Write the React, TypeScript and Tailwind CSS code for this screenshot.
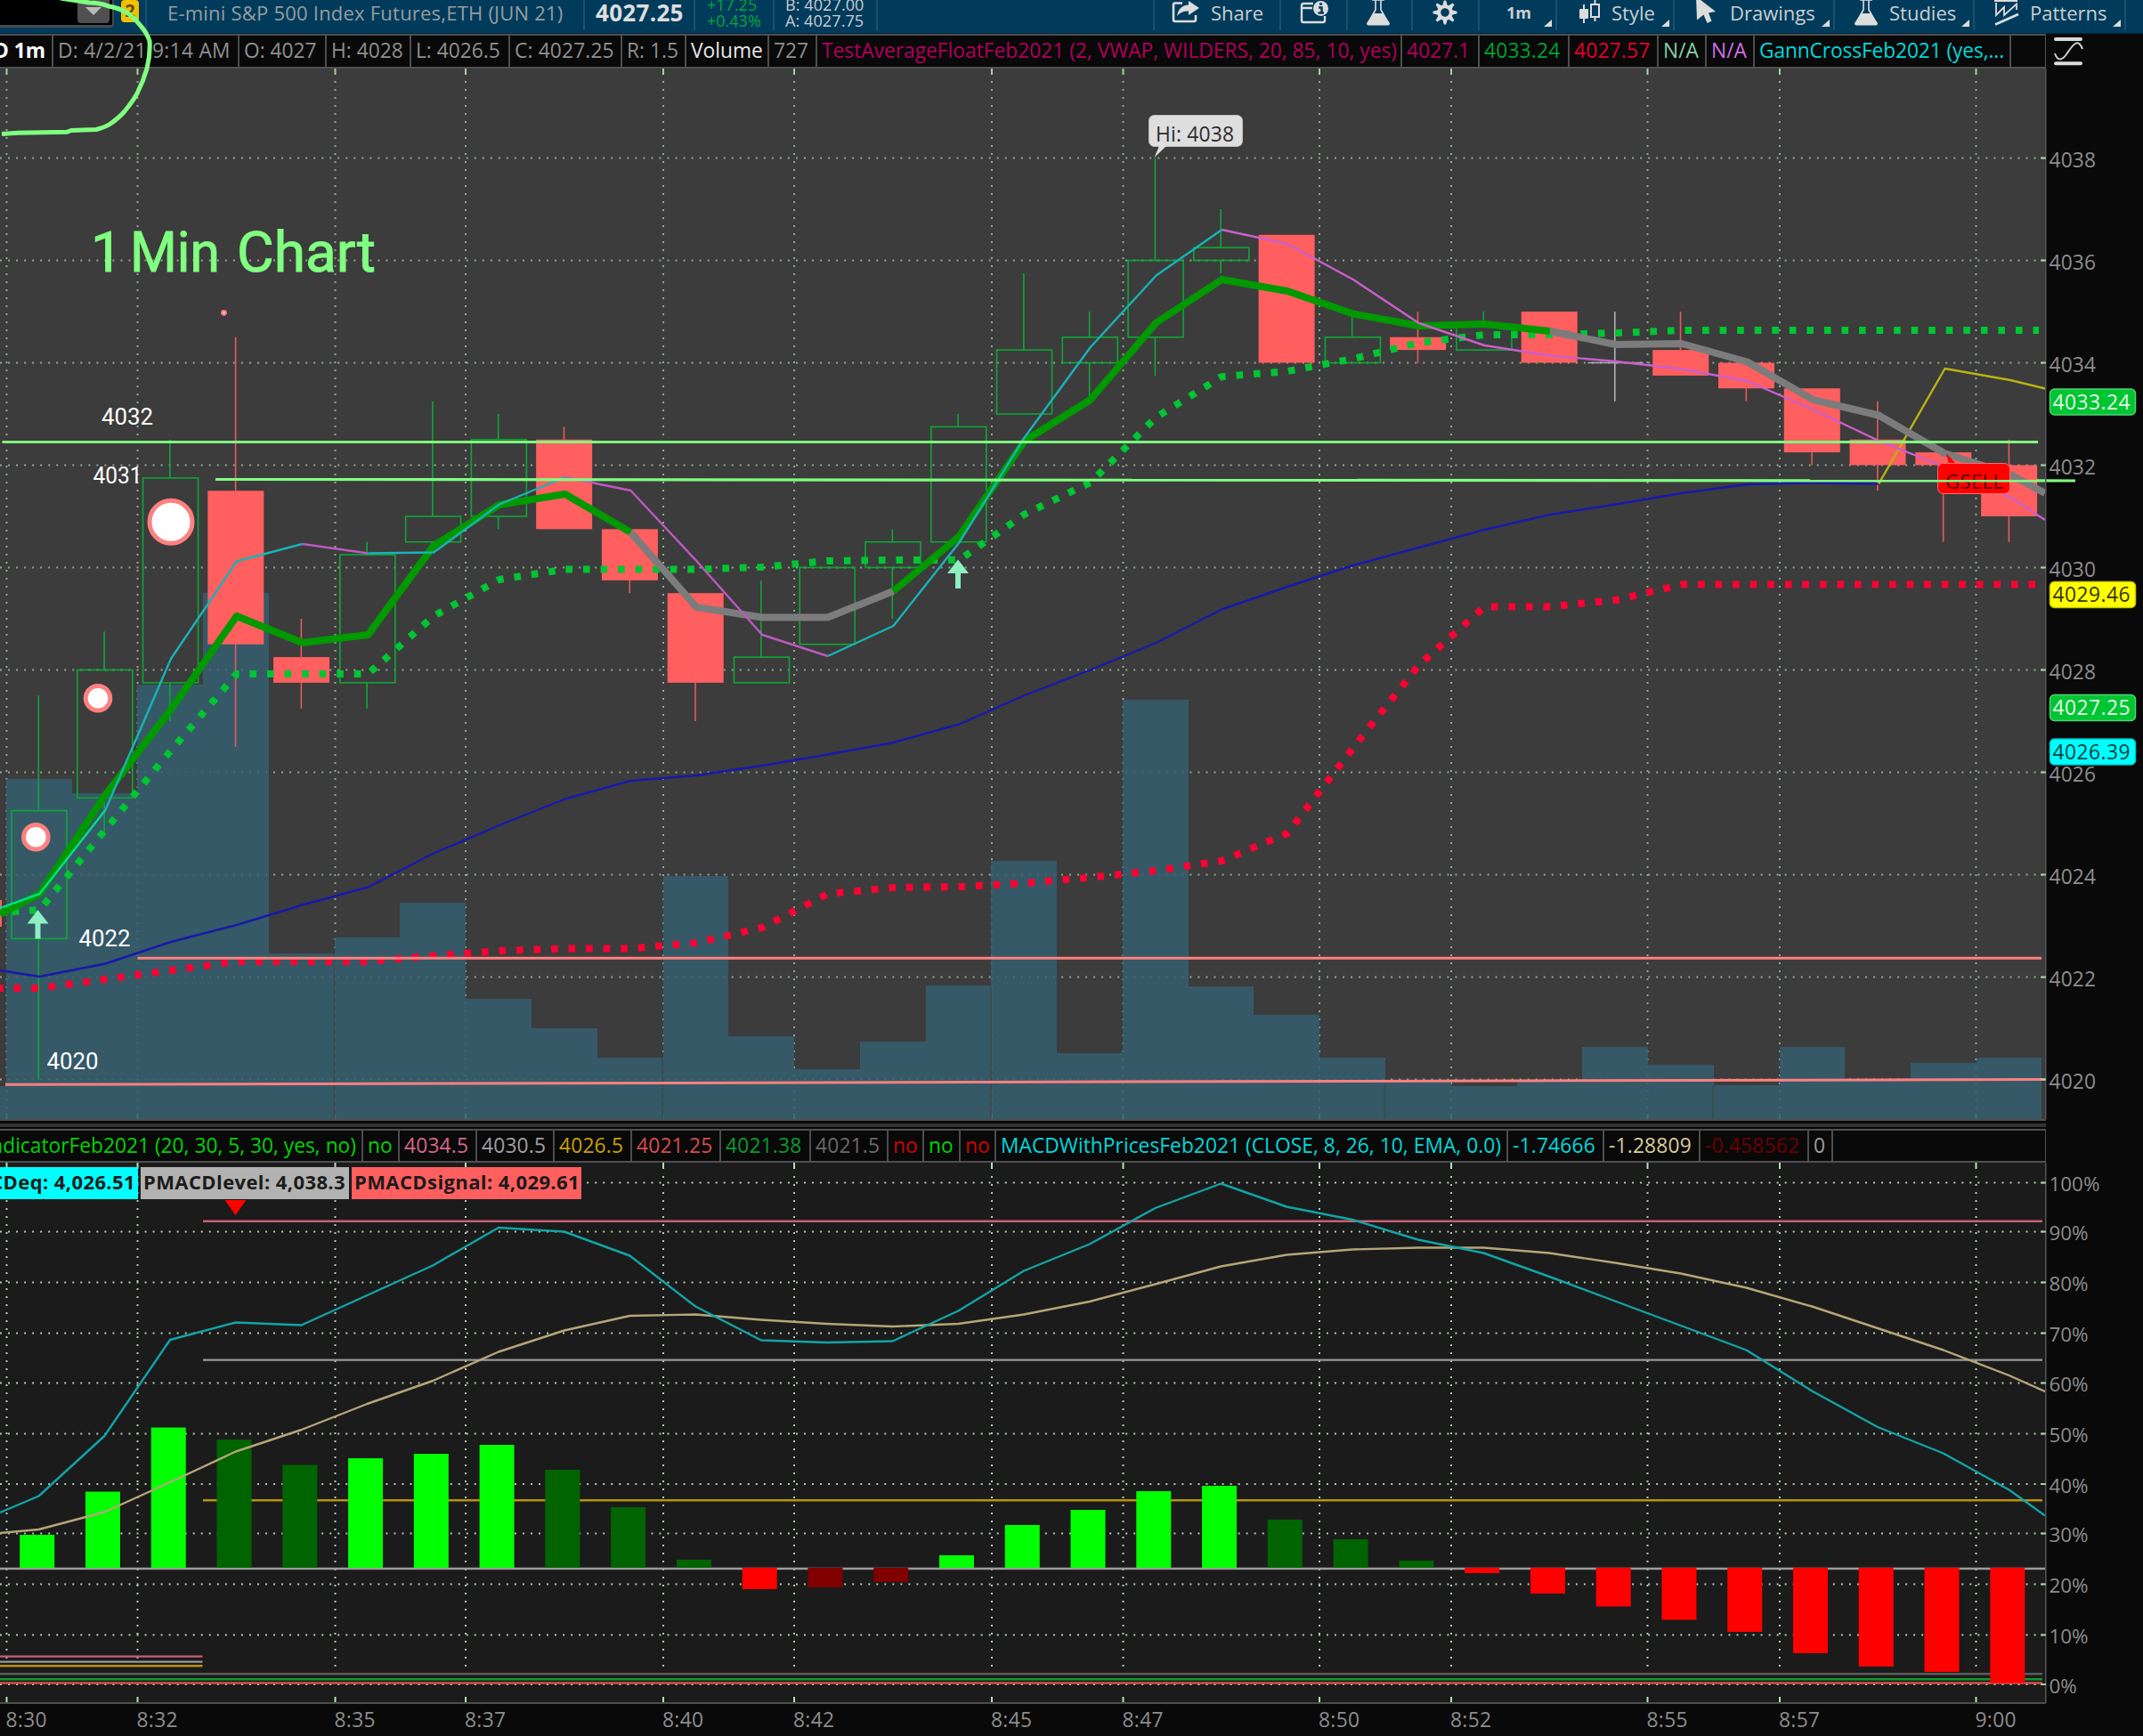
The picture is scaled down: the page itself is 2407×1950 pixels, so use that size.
import React from 'react';
import clsx from 'clsx';

const STEP = 73.77;
const FIRST = 43;
const PLOT_RIGHT = 2297;

const candleX = (i: number) => FIRST + STEP * i;
const priceY = (p: number) => 177.5 + (4038 - p) * 57.5;

type Candle = [kind: 'up' | 'down' | 'flat', high: number, top: number, bottom: number, low: number];

const candles: Candle[] = [
    ['up', 4027.5, 4025.25, 4022.75, 4020],
    ['up', 4028.75, 4028, 4025.5, 4024.75],
    ['up', 4032.5, 4031.75, 4027.75, 4027],
    ['down', 4034.5, 4031.5, 4028.5, 4026.5],
    ['down', 4029, 4028.25, 4027.75, 4027.25],
    ['up', 4030.5, 4030.25, 4027.75, 4027.25],
    ['up', 4033.25, 4031, 4030.5, 4030.5],
    ['up', 4033, 4032.5, 4031, 4030.75],
    ['down', 4032.75, 4032.5, 4030.75, 4030.75],
    ['down', 4030.75, 4030.75, 4029.75, 4029.5],
    ['down', 4029.5, 4029.5, 4027.75, 4027],
    ['up', 4029.75, 4028.25, 4027.75, 4027.75],
    ['up', 4030, 4030, 4028.5, 4028.5],
    ['up', 4030.75, 4030.5, 4030, 4029],
    ['up', 4033, 4032.75, 4030.5, 4030.5],
    ['up', 4035.75, 4034.25, 4033, 4033],
    ['up', 4035, 4034.5, 4034, 4033.25],
    ['up', 4038, 4036, 4034.5, 4033.75],
    ['up', 4037, 4036.25, 4036, 4035.75],
    ['down', 4036.5, 4036.5, 4034, 4034],
    ['up', 4035, 4034.5, 4034, 4034],
    ['down', 4035, 4034.5, 4034.25, 4034],
    ['up', 4035, 4034.75, 4034.25, 4034.25],
    ['down', 4035, 4035, 4034, 4034],
    ['flat', 4035, 4034, 4034, 4033.25],
    ['down', 4035, 4034.25, 4033.75, 4033.75],
    ['down', 4034, 4034, 4033.5, 4033.25],
    ['down', 4033.5, 4033.5, 4032.25, 4032],
    ['down', 4033.25, 4032.5, 4032, 4031.5],
    ['down', 4032.25, 4032.25, 4032, 4030.5],
    ['down', 4032.5, 4032, 4031, 4030.5],
];

const volumeTops = [
    875, 891, 769, 666, 1071, 1053, 1014, 1122, 1155, 1188, 984, 1164, 1201, 1170, 1107, 967,
    1183, 786, 1108, 1140, 1188, 1213, 1220, 1213, 1176, 1196, 1219, 1176, 1213, 1194, 1188,
];

const timeTicks: [number, string][] = [
    [7.5, '8:30'], [154.5, '8:32'], [376.5, '8:35'], [523, '8:37'], [745, '8:40'], [892, '8:42'],
    [1114, '8:45'], [1261.5, '8:47'], [1482, '8:50'], [1630, '8:52'], [1850.5, '8:55'],
    [1999, '8:57'], [2219.5, '9:00'],
];

const percentTicks: [number, string][] = [
    [1328.5, '100%'], [1383.5, '90%'], [1440.5, '80%'], [1497.5, '70%'], [1553.5, '60%'], [1610.5, '50%'],
    [1667, '40%'], [1722.5, '30%'], [1779.5, '20%'], [1836.5, '10%'], [1892, '0%'],
];

// moving average, split where its colour changes
const maY = [
    1004, 893, 797, 692, 722, 713, 613, 567, 555, 598, 682, 693.5, 693.5, 664, 602.5, 495,
    449, 362.5, 314, 327, 352.5, 366, 364, 372, 387, 386, 406.5, 449, 466.5, 509, 533,
];
const fastY = [
    1004, 910, 740, 630.5, 611, 621.5, 620.5, 566.5, 536, 551, 630, 713, 737, 703, 609.5, 491,
    390, 309.5, 258, 274, 314, 363, 388, 399.5, 406, 414.5, 428, 460, 495, 524.5, 558.5,
];
const blueY = [
    1097, 1082.5, 1058, 1039, 1016.5, 996.5, 958.5, 927, 897.5, 877, 871, 860, 847.5, 834, 813.5, 781,
    752.5, 722, 684.5, 659, 635, 615, 595, 578, 566.5, 554, 544, 542.5, 543.5,
];
const upperY = [
    1022, 932, 843, 757, 757, 757, 692, 651, 639.5, 639.5, 639.5, 637, 630, 629, 629, 577.5,
    542, 468.5, 423, 417, 403, 385, 376, 376, 374, 371, 371, 371, 371, 371, 371,
];
const lowerY = [
    1110, 1100, 1090, 1080, 1080, 1080, 1073.5, 1068, 1065.5, 1065.5, 1059, 1042, 1004, 997, 996, 992,
    985.5, 978, 967, 936, 840, 747, 681.5, 681.5, 674, 656.5, 656.5, 656.5, 656.5, 656.5, 656.5,
];
const macdY = [
    1680.5, 1613, 1505, 1485.5, 1488.5, 1455, 1421.5, 1379, 1383.5, 1410.5, 1467.5, 1505.5, 1508, 1506.5,
    1472.5, 1427.5, 1397.5, 1357, 1329.5, 1355.5, 1370, 1392.5, 1407.5, 1434, 1461.5, 1489, 1516.5, 1562.5,
    1603, 1632.5, 1673.5,
];
const signalY = [
    1718, 1698.5, 1665, 1630.5, 1606, 1577, 1551, 1518.5, 1494.5, 1478, 1476.5, 1482.5, 1487, 1490, 1487,
    1476.5, 1462, 1442.5, 1422.5, 1409.5, 1403.5, 1401.5, 1401.5, 1407.5, 1418.5, 1430.5, 1446.5, 1467.5,
    1492, 1516.5, 1545,
];

const LIME = '#00ff00';
const FOREST = '#006400';
const RED = '#ff0000';
const MAROON = '#800000';

const histogram: [number, string][] = [
    [1724, LIME], [1675.5, LIME], [1603.5, LIME], [1617, FOREST], [1645.5, FOREST], [1638, LIME],
    [1633, LIME], [1623, LIME], [1651, FOREST], [1693, FOREST], [1752, FOREST], [1785, RED],
    [1783, MAROON], [1777, MAROON], [1747, LIME], [1713, LIME], [1696, LIME], [1675, LIME],
    [1669, LIME], [1707, FOREST], [1729, FOREST], [1753, FOREST], [1767, RED], [1790, RED],
    [1804.5, RED], [1819.5, RED], [1833, RED], [1857, RED], [1872, RED], [1878, RED], [1890.5, RED],
];

const line = (ys: number[], from = 0, to = ys.length - 1, dx = 1.5) =>
    ys.slice(from, to + 1).map((y, k) => `${(candleX(from + k) + dx).toFixed(1)},${y}`).join(' ');

const font = '"Open Sans", "Noto Sans", sans-serif';
const noteFont = 'Roboto, "Open Sans", sans-serif';

interface CellProps {
    width: string;
    color: string;
    children?: React.ReactNode;
    className?: string;
}

const Cell: React.FC<CellProps> = ({ width, color, children, className }) => (
    <div
        className={clsx(
            'flex h-full shrink-0 items-center overflow-hidden whitespace-nowrap border-r-2 border-[#4d4d4d] pl-[5px]',
            width,
            color,
            className
        )}
    >
        {children}
    </div>
);

const StudyRow: React.FC<{ children: React.ReactNode; className?: string }> = ({ children, className }) => (
    <div className={clsx('flex w-[2298px] shrink-0 border-y-2 border-r border-[#4f4f4f] bg-[#090909] text-[22.75px]', className)}>
        {children}
    </div>
);

interface ToolProps {
    width: string;
    children: React.ReactNode;
    menu?: boolean;
    className?: string;
}

const Tool: React.FC<ToolProps> = ({ width, children, menu, className }) => (
    <div className={clsx('relative flex h-[34px] shrink-0 items-start border-l-2 border-[#1b4f6e] whitespace-nowrap', width, className)}>
        {children}
        {menu && (
            <svg className="absolute top-[22px] right-[4px]" width="9" height="9">
                <path d="M9 0V8H0Z" fill="#dcdcdc" />
            </svg>
        )}
    </div>
);

const Flask = () => (
    <svg width="28" height="30" viewBox="0 0 28 30" className="shrink-0">
        <path d="M7 0H21M11 0V11L3 25M17 0V11L25 25" stroke="#dcdcdc" strokeWidth="1.6" fill="none" />
        <path d="M9 15H19L27 26Q27 28.500 25 28.500H3Q1 28.500 1 26Z" fill="#dcdcdc" />
    </svg>
);

const Toolbar = () => (
    <div className="flex h-[38px] w-full shrink-0 overflow-hidden border-b border-[#00283f] bg-[#003b5b] text-[22px] leading-[28px] text-[#c9ced2]">
        <div className="flex h-[31px] w-[128px] shrink-0 justify-end rounded-br-[4px] border-r-2 border-b-[3px] border-[#45494c] bg-black pr-[3px]">
            <div className="flex h-[26px] w-[36px] justify-center rounded-b-[4px] bg-[#505050] pt-[8px]">
                <svg width="18" height="9">
                    <path d="M0 0H18L9 9Z" fill="#b9b9b9" />
                </svg>
            </div>
        </div>
        <div className="ml-[8px] h-[25px] w-[20px] shrink-0 rounded-[4px] bg-[#f3c000] text-center text-[20px] leading-[24px] font-bold text-[#5c4a00]">2</div>
        <Tool width="w-[492px]" className="ml-[7px] pl-[23px] tracking-[0.22px] text-[#989da0]">E-mini S&amp;P 500 Index Futures,ETH (JUN 21)</Tool>
        <Tool width="w-[124px]" className="pl-[12px] text-[26px] font-bold tracking-[0.3px] text-[#dedede]">4027.25</Tool>
        <Tool width="w-[89px]" className="flex-col pl-[13px] text-[18px] leading-[18px] text-[#00a83c]">
            <span className="-mt-[4px]">+17.25</span>
            <span>+0.43%</span>
        </Tool>
        <Tool width="w-[116px]" className="flex-col pl-[12px] text-[18px] leading-[18px] text-[#c9ced2]">
            <span className="-mt-[4px] tracking-[0.1px]">B: 4027.00</span>
            <span className="tracking-[0.1px]">A: 4027.75</span>
        </Tool>
        <Tool width="w-[311px]"><span /></Tool>
        <Tool width="w-[142px]" className="pl-[19px]">
            <svg width="33" height="27" viewBox="0 0 33 27" className="mr-[11px]">
                <path d="M12 3.500H4Q2 3.500 2 5.500V22Q2 24 4 24H25Q27 24 27 22V17" fill="none" stroke="#dcdcdc" strokeWidth="2.600" />
                <path d="M19 1L31 9L19 17V12.500Q11 12 6 18Q8 6 19 5.500Z" fill="#dcdcdc" />
            </svg>
            Share
        </Tool>
        <Tool width="w-[75px]" className="pl-[21px]">
            <svg width="34" height="27" viewBox="0 0 34 27">
                <path d="M15 4H4Q2 4 2 6V23Q2 25 4 25H26Q28 25 28 23V18M2 9H14" fill="none" stroke="#dcdcdc" strokeWidth="2.400" />
                <circle cx="23.500" cy="9.500" r="8.500" fill="#dcdcdc" />
                <path d="M22 4.500H25M21 8.500H24.500V14M20.500 14.500H27" stroke="#003b5b" strokeWidth="2.500" fill="none" />
            </svg>
        </Tool>
        <Tool width="w-[73px]" className="pl-[20px]"><Flask /></Tool>
        <Tool width="w-[75px]" className="pl-[22px]">
            <svg width="28" height="28" viewBox="-14 -14 28 28">
                <circle r="6.800" fill="none" stroke="#dcdcdc" strokeWidth="4" />
                {[0, 45, 90, 135, 180, 225, 270, 315].map(a => (
                    <path key={a} d="M-2.800 -7.500L-1.200 -13.500H1.200L2.800 -7.500Z" fill="#dcdcdc" transform={`rotate(${a})`} />
                ))}
            </svg>
        </Tool>
        <Tool width="w-[87px]" menu className="pl-[30px] text-[18px] font-bold">1m</Tool>
        <Tool width="w-[132px]" menu className="pl-[24px]">
            <svg width="25" height="27" viewBox="0 0 25 27" className="mr-[12px]">
                <path d="M6 5V26M18.500 0V24" stroke="#dcdcdc" strokeWidth="2" />
                <rect x="1" y="10" width="10" height="11" rx="1" fill="#dcdcdc" />
                <rect x="14" y="5" width="9" height="14" fill="#003b5b" stroke="#dcdcdc" strokeWidth="2" />
            </svg>
            Style
        </Tool>
        <Tool width="w-[180px]" menu className="pl-[24px]">
            <svg width="23" height="27" viewBox="0 0 23 27" className="mr-[15px]">
                <path d="M0 -4L22 13L14 14.500L17.500 23.500L12.500 26L8.500 16.500L1 22.500Z" fill="#dcdcdc" />
            </svg>
            Drawings
        </Tool>
        <Tool width="w-[157px]" menu className="pl-[21px]">
            <Flask />
            <span className="ml-[12px]">Studies</span>
        </Tool>
        <Tool width="w-[170px]" menu className="pl-[21px]">
            <svg width="30" height="30" viewBox="0 0 30 30" className="mr-[11px]">
                <path d="M1 0.500H27M2 27.500L28 16" stroke="#dcdcdc" strokeWidth="3" />
                <path d="M3 3V17L12 8V17L26 4.500V11" fill="none" stroke="#dcdcdc" strokeWidth="1.800" />
            </svg>
            Patterns
        </Tool>
        <Tool width="w-[20px]"><span /></Tool>
    </div>
);

const Badge: React.FC<{ y: number; fill: string; stroke: string; color: string; text: string }> = ({ y, fill, stroke, color, text }) => (
    <g>
        <rect x="2302.500" y={y} width="96" height="29" rx="5" fill={fill} stroke={stroke} strokeWidth="1.500" />
        <text x="2305.500" y={y + 22.8} fontSize="22.75" textLength="87" fill={color}>{text}</text>
    </g>
);

const UpArrow: React.FC<{ x: number; y: number }> = ({ x, y }) => (
    <path d={`M${x} ${y}l12 15.500h-9v17h-6v-17h-9Z`} fill="#8eefc0" />
);

const Marker: React.FC<{ x: number; y: number; r: number }> = ({ x, y, r }) => (
    <circle cx={x} cy={y} r={r} fill="#fff" stroke="#ff8080" strokeWidth="5" />
);

const PriceChart = () => (
    <svg className="block shrink-0" width="2407" height="1180" viewBox="0 77 2407 1180" fontFamily={font}>
        <rect x="0" y="77" width="2298" height="1180" fill="#3c3c3c" />
        <g stroke="#91a891" strokeWidth="2">
            {[4038, 4036, 4034, 4032, 4030, 4028, 4026, 4024, 4022, 4020].map(p => (
                <path key={p} d={`M0 ${priceY(p)}H${PLOT_RIGHT}`} strokeDasharray="2 7.03" />
            ))}
            {timeTicks.map(([x]) => (
                <path key={x} d={`M${x} 91V1250`} strokeDasharray="2 7" />
            ))}
        </g>
        <g stroke="#a6cfa6" strokeWidth="2">
            {timeTicks.map(([x]) => (
                <path key={x} d={`M${x} 77V84M${x} 1251V1257`} />
            ))}
        </g>
        <g fill="#345e6f" fillOpacity="0.85">
            <rect x="0" y="1220" width="7" height="37" />
            {volumeTops.map((y, i) => (
                <rect key={i} x={6.8 + STEP * i} y={y} width={i === 30 ? 73 : STEP} height={1257 - y} shapeRendering="crispEdges" />
            ))}
        </g>
        <path d="M375.500 1071V1257M744.500 1188V1257M1113 1107V1257M1555.500 1213V1257M1924 1219V1257" stroke="#3c4a50" strokeWidth="1.500" />

        {candles.map(([kind, high, top, bottom, low], i) => {
            const x = candleX(i);
            const stroke = kind === 'up' ? '#0ea736' : kind === 'down' ? '#e85a5a' : '#b0b0b0';
            return (
                <g key={i} stroke={stroke} strokeWidth="1.600">
                    <path d={`M${x + 0.3} ${priceY(high)}V${priceY(top)}M${x + 0.3} ${priceY(bottom)}V${priceY(low)}`} />
                    {kind === 'up' && (
                        <rect x={x - 30} y={priceY(top)} width="62" height={priceY(bottom) - priceY(top)} fill="none" />
                    )}
                    {kind === 'down' && (
                        <rect x={x - 31} y={priceY(top)} width="63" height={priceY(bottom) - priceY(top)} fill="#ff5f5f" stroke="none" />
                    )}
                    {kind === 'flat' && <path d={`M${x - 30} ${priceY(top)}H${x + 32}`} />}
                </g>
            );
        })}
        <rect x="0" y="1011" width="2" height="30" fill="#ff5f5f" />

        <g fill="none" strokeLinejoin="round">
            <polyline points={`0,1025 ${line(upperY)} 2290,371`} stroke="#00c532" strokeWidth="8" strokeDasharray="7.600 11.950" strokeDashoffset="6" />
            <polyline points={`0,1110 ${line(lowerY)} 2297,656.5`} stroke="#ff0032" strokeWidth="8" strokeDasharray="7.600 11.950" strokeDashoffset="4" />
            <polyline points={`0,1090 ${line(blueY)}`} stroke="#1818ad" strokeWidth="2.400" />
            <polyline points={`${line(blueY, 28)} 2184.5,414 2258,427 2297,436.5`} stroke="#b9b414" strokeWidth="2.400" />
            <g strokeWidth="8">
                <polyline points={`0,1027 ${line(maY, 0, 9)}`} stroke="#009900" />
                <polyline points={line(maY, 9, 13)} stroke="#7c7c7c" />
                <polyline points={line(maY, 13, 23)} stroke="#009900" />
                <polyline points={`${line(maY, 23)} 2297,554`} stroke="#7c7c7c" />
            </g>
            <g strokeWidth="2.400">
                <polyline points={`0,1020 ${line(fastY, 0, 1)}`} stroke="#00e08a" />
                <polyline points={line(fastY, 1, 4)} stroke="#19b3b6" />
                <polyline points={line(fastY, 4, 5)} stroke="#bd59c0" />
                <polyline points={line(fastY, 5, 8)} stroke="#19b3b6" />
                <polyline points={line(fastY, 8, 12)} stroke="#bd59c0" />
                <polyline points={line(fastY, 12, 18)} stroke="#19b3b6" />
                <polyline points={`${line(fastY, 18)} 2297,584`} stroke="#c95fcb" />
            </g>
        </g>
        <UpArrow x={42.5} y={1022} />
        <UpArrow x={1076} y={628.5} />

        <rect x="1290.500" y="129.500" width="105" height="35" rx="6" fill="#dedede" stroke="#c0c0c0" />
        <path d="M1302 164L1296.500 177L1310 164Z" fill="#dedede" />
        <text x="1298" y="158.800" fontSize="22.75" textLength="88" fill="#2c2c2c">Hi: 4038</text>
        <path d="M2186 509L2189 522H2198Z" fill={RED} />
        <rect x="2176.500" y="520.500" width="81" height="34" rx="6" fill={RED} stroke="#ff6a6a" strokeWidth="1" />
        <text x="2185" y="548.500" fontSize="22" textLength="65" fill="#5a0000">GSELL</text>

        <g fill="none" stroke="#80ff80" strokeWidth="3.200">
            <path d="M2.500 496.500H2289" />
            <path d="M242 538.500L2331 540" />
        </g>
        <g fill="none" stroke="#ff8080" strokeWidth="3">
            <path d="M154.500 1076.300H2293" />
            <path d="M6 1218.300L2298 1212.500" />
        </g>
        <Marker x={192} y={586.3} r={24} />
        <Marker x={110} y={784.3} r={13.8} />
        <Marker x={40.3} y={940.3} r={13.8} />
        <circle cx="251.500" cy="351.300" r="2.200" fill="#fff" stroke="#ff8080" strokeWidth="2.400" />
        <g fontFamily={noteFont}>
            <g fontSize="63" fill="#80ff80" stroke="#80ff80" strokeWidth="1">
                <text x="102" y="305">1</text>
                <text x="146" y="305" textLength="101" lengthAdjust="spacingAndGlyphs">Min</text>
                <text x="266" y="305" textLength="156" lengthAdjust="spacingAndGlyphs">Chart</text>
            </g>
            <g fill="#fff" fontSize="26">
                <text x="114" y="477" textLength="58" lengthAdjust="spacingAndGlyphs">4032</text>
                <text x="104.500" y="543" textLength="55" lengthAdjust="spacingAndGlyphs">4031</text>
                <text x="88.500" y="1063" textLength="58" lengthAdjust="spacingAndGlyphs">4022</text>
                <text x="52.500" y="1200.500" textLength="58" lengthAdjust="spacingAndGlyphs">4020</text>
            </g>
        </g>

        <rect x="2297" y="77" width="1.500" height="1180" fill="#555" />
        <g fontSize="22.75" fill="#8d8d8d">
            {[4038, 4036, 4034, 4032, 4030, 4028, 4026, 4024, 4022, 4020].map(p => (
                <g key={p}>
                    <rect x="2292" y={priceY(p) - 1} width="6" height="2" fill="#a6cfa6" />
                    <text x="2301.500" y={priceY(p) + 10} textLength="52.500">{p}</text>
                </g>
            ))}
        </g>
        <Badge y={437} fill="#00c532" stroke="#52d172" color="#e4f8e8" text="4033.24" />
        <Badge y={653.5} fill="#ffff00" stroke="#c9c900" color="#333300" text="4029.46" />
        <Badge y={780.5} fill="#00c532" stroke="#52d172" color="#e4f8e8" text="4027.25" />
        <Badge y={830} fill="#00ffff" stroke="#00c9c9" color="#003f3f" text="4026.39" />
    </svg>
);

const MacdChart = () => (
    <svg className="block shrink-0" width="2407" height="644" viewBox="0 1306 2407 644" fontFamily={font}>
        <rect x="0" y="1306" width="2298" height="607" fill="#1b1b1b" />
        <g stroke="#aecdae" strokeWidth="2">
            {percentTicks.map(([y]) => (
                <path key={y} d={`M0 ${y}H${PLOT_RIGHT}`} strokeDasharray="2 7.030" />
            ))}
            {timeTicks.map(([x]) => (
                <path key={x} d={`M${x} 1321V1876`} strokeDasharray="2 7" />
            ))}
        </g>
        <g stroke="#b4e0b4" strokeWidth="2">
            {timeTicks.map(([x]) => (
                <path key={x} d={`M${x} 1306V1313M${x} 1906V1912`} />
            ))}
        </g>
        <g strokeWidth="2.400">
            <path d="M228 1371.800H2294" stroke="#c75f75" />
            <path d="M228 1527.600H2294" stroke="#989898" />
            <path d="M228 1685.300H2294" stroke="#b8920f" />
            <path d="M0 1860.600H227.500" stroke="#c75f75" />
            <path d="M0 1866.600H227.500" stroke="#989898" />
            <path d="M0 1871.300H227.500" stroke="#b8920f" />
            <path d="M0 1880.200H2294" stroke="#5c5c5c" />
            <path d="M0 1886.300H2294" stroke="#0b9a2c" />
            <path d="M0 1890.500H2294" stroke="#dd4f4f" />
            <path d="M0 1762H2297" stroke="#9c9c9c" />
        </g>
        {histogram.map(([y, fill], i) => (
            <rect key={i} x={22.2 + STEP * i} y={Math.min(y, 1761)} width="39" height={Math.abs(1761 - y)} fill={fill} />
        ))}
        <g fill="none" strokeWidth="2.400" strokeLinejoin="round">
            <polyline points={`0,1722 ${line(signalY, 0, 30, 0.5)} 2297,1563`} stroke="#b5a678" />
            <polyline points={`0,1699 ${line(macdY, 0, 30, 0.5)} 2297,1702.5`} stroke="#12a4a6" />
        </g>
        <path d="M252.500 1348H276.500L264.500 1365Z" fill={RED} />
        <rect x="2297" y="1306" width="1.500" height="607" fill="#555" />
        <rect x="0" y="1912" width="2298" height="2" fill="#4c4c4c" />
        <g fontSize="22.75" fill="#8d8d8d">
            {percentTicks.map(([y, label]) => (
                <g key={label}>
                    <rect x="2292" y={y - 1} width="6" height="2" fill="#a6cfa6" />
                    <text x="2301.500" y={y + 9.5} fontSize="22.400">{label}</text>
                </g>
            ))}
            {timeTicks.map(([x, label]) => (
                <text key={label} x={x - 1} y="1939.600" textLength="46">{label}</text>
            ))}
        </g>
    </svg>
);

export default function App() {
    return (
        <div className="relative flex h-[1950px] w-[2407px] flex-col overflow-hidden bg-[#090909] font-['Open_Sans','Noto_Sans',sans-serif]">
            <Toolbar />
            <div className="flex h-[39px] shrink-0">
                <StudyRow className="h-[39px]">
                    <Cell width="w-[60px]" color="text-white" className="justify-end pr-[7px] font-bold">AGG D 1m</Cell>
                    <Cell width="w-[209px]" color="text-[#8f8f8f]" className="tracking-[0.3px]">D: 4/2/21 9:14 AM</Cell>
                    <Cell width="w-[98px]" color="text-[#8f8f8f]">O: 4027</Cell>
                    <Cell width="w-[95px]" color="text-[#8f8f8f]">H: 4028</Cell>
                    <Cell width="w-[111px]" color="text-[#8f8f8f]">L: 4026.5</Cell>
                    <Cell width="w-[126px]" color="text-[#8f8f8f]" className="tracking-[0.15px]">C: 4027.25</Cell>
                    <Cell width="w-[72px]" color="text-[#8f8f8f]">R: 1.5</Cell>
                    <Cell width="w-[93px]" color="text-[#e8e8e8]">Volume</Cell>
                    <Cell width="w-[54px]" color="text-[#8f8f8f]">727</Cell>
                    <Cell width="w-[657px]" color="text-[#b0005c]">TestAverageFloatFeb2021 (2, VWAP, WILDERS, 20, 85, 10, yes)</Cell>
                    <Cell width="w-[87px]" color="text-[#b0005c]">4027.1</Cell>
                    <Cell width="w-[101px]" color="text-[#00a22d]" className="tracking-[0.2px]">4033.24</Cell>
                    <Cell width="w-[100px]" color="text-[#e6002d]" className="tracking-[0.2px]">4027.57</Cell>
                    <Cell width="w-[54px]" color="text-[#84d0a8]">N/A</Cell>
                    <Cell width="w-[54px]" color="text-[#d070e0]">N/A</Cell>
                    <Cell width="w-[288px]" color="text-[#00d8dc]" className="tracking-[-0.12px]">GannCrossFeb2021 (yes,...</Cell>
                </StudyRow>
                <svg width="109" height="39" viewBox="0 0 109 39">
                    <path d="M11 6H39M11 33.300H39" stroke="#dcdcdc" strokeWidth="4" strokeLinecap="round" />
                    <path d="M10 22C13 31 18 30 23 23C29 14 36 3 41 17" fill="none" stroke="#cfcfcf" strokeWidth="2" />
                </svg>
            </div>
            <PriceChart />
            <div className="h-[11px] w-[2298px] shrink-0 border-t-2 border-[#4f4f4f] pt-[3px]">
                <div className="h-[4px] bg-[#333]" />
            </div>
            <StudyRow className="h-[38px]">
                <Cell width="w-[408px]" color="text-[#00d400]" className="justify-end pr-[6px]">IndicatorFeb2021 (20, 30, 5, 30, yes, no)</Cell>
                <Cell width="w-[41px]" color="text-[#00d400]">no</Cell>
                <Cell width="w-[87px]" color="text-[#d8668a]" className="tracking-[0.2px]">4034.5</Cell>
                <Cell width="w-[87px]" color="text-[#a0a0a0]" className="tracking-[0.2px]">4030.5</Cell>
                <Cell width="w-[87px]" color="text-[#c8a000]" className="tracking-[0.2px]">4026.5</Cell>
                <Cell width="w-[100px]" color="text-[#d84c4c]" className="tracking-[0.2px]">4021.25</Cell>
                <Cell width="w-[101px]" color="text-[#0b9a2c]" className="tracking-[0.2px]">4021.38</Cell>
                <Cell width="w-[87px]" color="text-[#6a6a6a]" className="tracking-[0.2px]">4021.5</Cell>
                <Cell width="w-[40px]" color="text-[#d40000]">no</Cell>
                <Cell width="w-[41px]" color="text-[#00d400]">no</Cell>
                <Cell width="w-[40px]" color="text-[#d40000]">no</Cell>
                <Cell width="w-[575px]" color="text-[#00d8dc]" className="tracking-[0.04px]">MACDWithPricesFeb2021 (CLOSE, 8, 26, 10, EMA, 0.0)</Cell>
                <Cell width="w-[108px]" color="text-[#00d8dc]" className="tracking-[0.2px]">-1.74666</Cell>
                <Cell width="w-[108px]" color="text-[#d8cc98]" className="tracking-[0.2px]">-1.28809</Cell>
                <Cell width="w-[122px]" color="text-[#6c0000]" className="tracking-[0.2px]">-0.458562</Cell>
                <Cell width="w-[27px]" color="text-[#a0a0a0]">0</Cell>
            </StudyRow>
            <MacdChart />

            <div className="absolute top-[1311px] left-0 flex h-[36px] gap-[3px] text-[22px] leading-[33px] font-bold tracking-[0.4px] whitespace-nowrap text-[#1b1b1b]">
                <div className="flex w-[155px] justify-end overflow-hidden bg-[#00ffff] pr-[3px]">PMACDeq: 4,026.51</div>
                <div className="w-[234px] overflow-hidden bg-[#b2b2b2] pl-[3px]">PMACDlevel: 4,038.3</div>
                <div className="w-[258px] overflow-hidden bg-[#ff5f5f] pl-[3px]">PMACDsignal: 4,029.61</div>
            </div>

            <svg className="pointer-events-none absolute top-0 left-0" width="180" height="160">
                <path
                    d="M2 150.500L20 149.300L75 148.300L80 146.500L108 145.500Q118 143 124 139Q134 132 140 125Q149 114 154 105Q161 91 165 77Q169 62 168 46Q165 37 158 29Q152 21 144 15Q134 9 122 7Q112 3 100 3L88 1L68 -2"
                    fill="none"
                    stroke="#80ff80"
                    strokeWidth="5"
                    strokeLinejoin="round"
                />
            </svg>
        </div>
    );
}
